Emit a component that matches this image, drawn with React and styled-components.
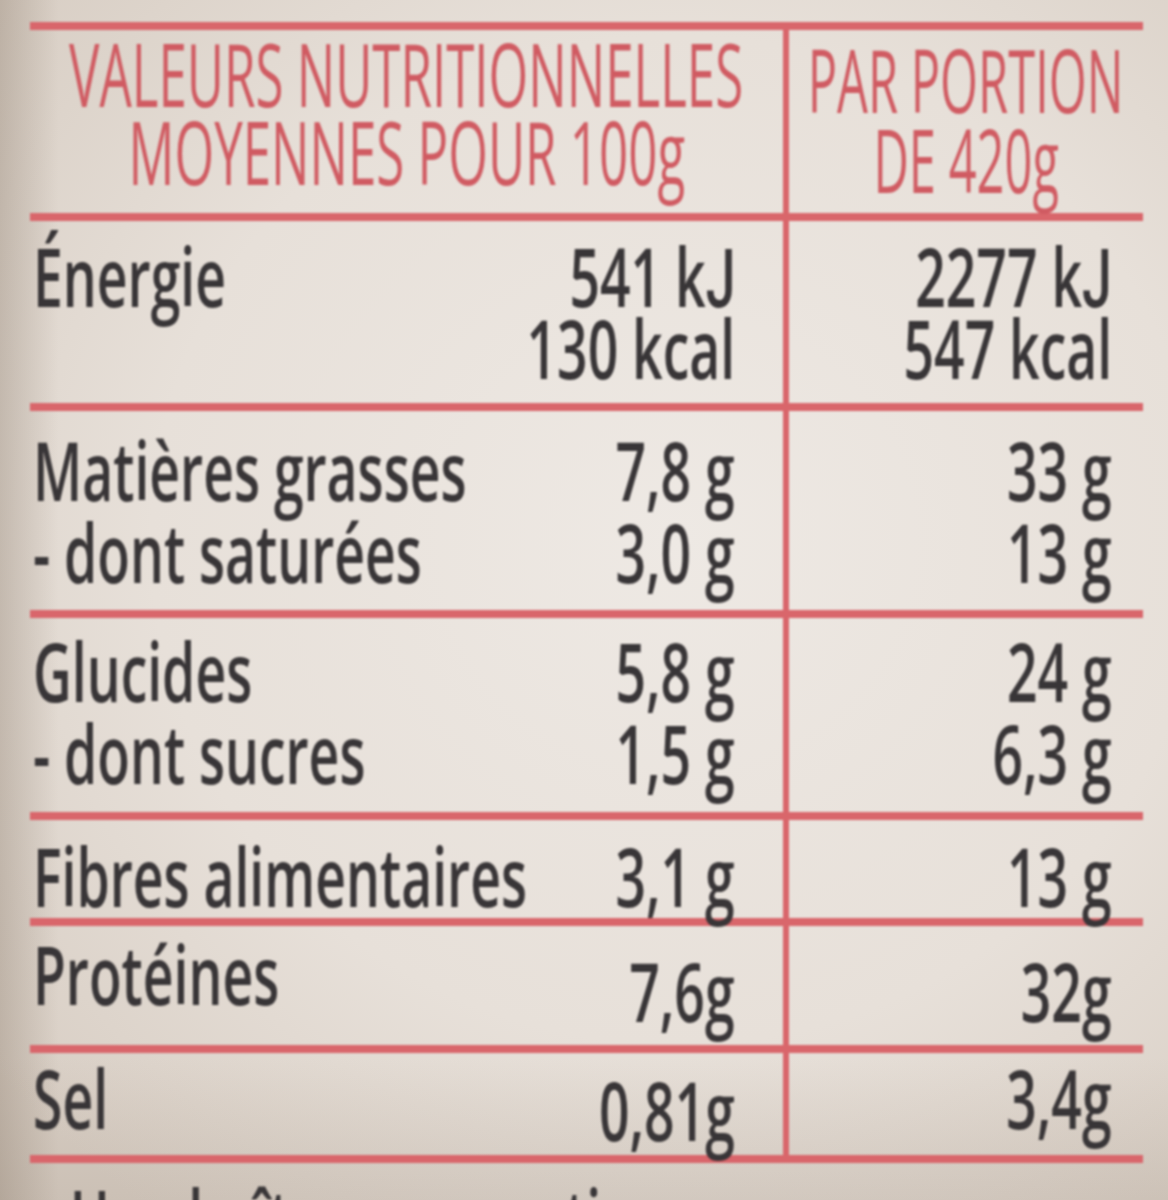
import React from 'react'
import styled, { createGlobalStyle } from 'styled-components';

const red = '#d9666b';
const ink = '#383537';

const GlobalStyle = createGlobalStyle`
    *{
        box-sizing: border-box;
    }
    body{
        margin: 0;
        background: #e7e0d9;
        font-family: "Open Sans", "DejaVu Sans Condensed", "Liberation Sans", sans-serif;
    }
`;

// the J of "kJ" sits on the baseline on the label, so it takes a font whose J does too
const FlatJ = styled.span`
    font-family: Roboto, "Liberation Sans", sans-serif;
    font-weight: 500;
`;

const kJ = (n) => <>{n} k<FlatJ>J</FlatJ></>;

const sections = [
    { labels: ['Énergie'], per100: [kJ('541'), '130 kcal'], portion: [kJ('2277'), '547 kcal'], pt: 19, pb: 19, lh: 72, h: 182 },
    { labels: ['Matières grasses', '- dont saturées'], per100: ['7,8 g', '3,0 g'], portion: ['33 g', '13 g'], pt: 18, pb: 17, lh: 82, h: 199 },
    { labels: ['Glucides', '- dont sucres'], per100: ['5,8 g', '1,5 g'], portion: ['24 g', '6,3 g'], pt: 12, pb: 18, lh: 82, h: 194 },
    { labels: ['Fibres alimentaires'], per100: ['3,1 g'], portion: ['13 g'], pt: 21, pb: 7, lh: 70, h: 98 },
    { labels: ['Protéines'], per100: ['7,6g'], portion: ['32g'], pt: 13, pb: 19, lh: 70, h: 119, low: 'end', lowRight: 'end' },
    { labels: ['Sel'], per100: ['0,81g'], portion: ['3,4g'], pt: 10, pb: 10, lh: 70, h: 102, low: 'end', lowRight: 'start' },
];

const NutritionLabel = () => {
    return (
        <Page>
            <GlobalStyle />
            <Table>
                <Section>
                    <HeaderCell $pt={4} $pb={23} $divider>
                        <Stack $align="center">
                            <Line $lh={78}><Squeeze $sx={0.58} $origin="center">VALEURS NUTRITIONNELLES</Squeeze></Line>
                            <Line $lh={78}><Squeeze $sx={0.58} $origin="center">MOYENNES POUR 100g</Squeeze></Line>
                        </Stack>
                    </HeaderCell>
                    <HeaderCell $pt={9} $pb={14}>
                        <Stack $align="center">
                            <Line $lh={80}><Squeeze $sx={0.555} $origin="center">PAR PORTION</Squeeze></Line>
                            <Line $lh={80}><Squeeze $sx={0.555} $origin="center">DE 420g</Squeeze></Line>
                        </Stack>
                    </HeaderCell>
                </Section>

                {sections.map((s) => (
                    <Section key={s.labels[0]}>
                        <LeftCell $pt={s.pt} $pb={s.pb} $h={s.h}>
                            <Stack>
                                {s.labels.map((l) => (
                                    <Line key={l} $lh={s.lh}><Squeeze $sx={0.66} $origin="left">{l}</Squeeze></Line>
                                ))}
                            </Stack>
                            <Stack $align="right" $v={s.low}>
                                {s.per100.map((v, i) => (
                                    <Line key={i} $lh={s.lh}><Squeeze $sx={0.66} $origin="right">{v}</Squeeze></Line>
                                ))}
                            </Stack>
                        </LeftCell>
                        <RightCell $pt={s.pt} $pb={s.pb} $h={s.h}>
                            <Stack $align="right" $v={s.lowRight}>
                                {s.portion.map((v, i) => (
                                    <Line key={i} $lh={s.lh}><Squeeze $sx={0.66} $origin="right">{v}</Squeeze></Line>
                                ))}
                            </Stack>
                        </RightCell>
                    </Section>
                ))}
            </Table>
            <Footer>
                <Line $lh={70}><Squeeze $sx={0.66} $origin="left">Une boîte : une portion</Squeeze></Line>
            </Footer>
        </Page>
    )
}

const Page = styled.main`
    position: relative;
    width: 1168px;
    height: 1200px;
    overflow: hidden;
    padding: 22px 25px 0 30px;
    background:
        linear-gradient(90deg, rgba(110, 92, 74, 0.25) 0%, rgba(110, 92, 74, 0) 5%),
        linear-gradient(0deg, rgba(110, 92, 74, 0.12) 0%, rgba(110, 92, 74, 0) 12%),
        radial-gradient(ellipse 75% 70% at 58% 45%, #eee9e4 0%, #e7e0d9 60%, #d8cec4 100%);
`;

const Table = styled.div`
    width: 1113px;
    border-top: 8px solid ${red};
    filter: blur(1.2px);
`;

const Section = styled.div`
    display: grid;
    grid-template-columns: 759px 354px;
    border-bottom: 8px solid ${red};
`;

const HeaderCell = styled.div`
    display: grid;
    min-width: 0;
    padding: ${p => p.$pt}px 0 ${p => p.$pb}px;
    border-right: ${p => p.$divider ? `6px solid ${red}` : 'none'};
    color: #d05b62;
    font-size: 88px;
    font-weight: 500;
`;

const LeftCell = styled.div`
    display: grid;
    grid-template-columns: minmax(0, 1fr) auto;
    min-height: ${p => p.$h}px;
    padding: ${p => p.$pt}px 48px ${p => p.$pb}px 3px;
    border-right: 6px solid ${red};
    color: ${ink};
    font-size: 81px;
    font-weight: 600;
`;

const RightCell = styled.div`
    display: grid;
    grid-template-columns: minmax(0, 1fr);
    min-height: ${p => p.$h}px;
    padding: ${p => p.$pt}px 31px ${p => p.$pb}px 0;
    color: ${ink};
    font-size: 81px;
    font-weight: 600;
`;

const Stack = styled.div`
    display: flex;
    flex-direction: column;
    min-width: 0;
    align-items: ${p => p.$align === 'right' ? 'flex-end' : p.$align === 'center' ? 'center' : 'flex-start'};
    align-self: ${p => p.$v || 'start'};
`;

const Line = styled.div`
    height: ${p => p.$lh}px;
    line-height: ${p => p.$lh}px;
    white-space: nowrap;
`;

const Squeeze = styled.span`
    display: inline-block;
    transform: scaleX(${p => p.$sx});
    transform-origin: ${p => p.$origin} center;
`;

const Footer = styled.div`
    margin-top: 20px;
    padding-left: 40px;
    color: ${ink};
    font-size: 81px;
    font-weight: 600;
    filter: blur(1.2px);
`;

export default NutritionLabel;
